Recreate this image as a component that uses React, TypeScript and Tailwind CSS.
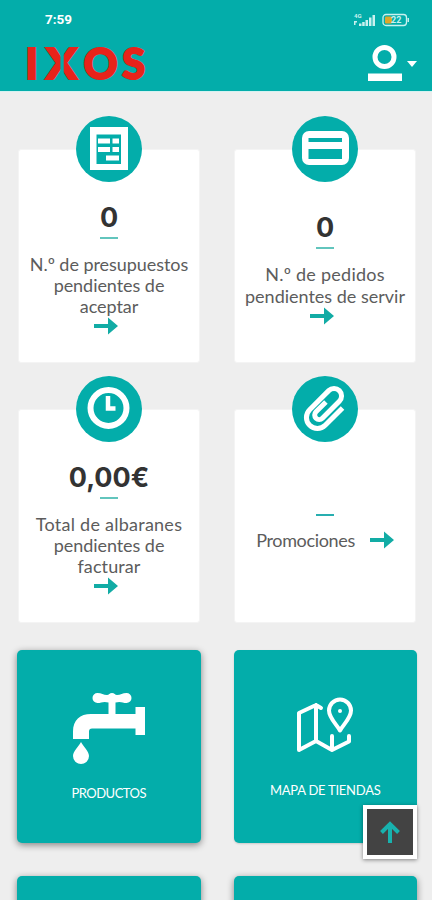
import type { ReactNode } from "react";

interface Summary {
  id: string;
  value?: string;
  lines: { text: string; tracking: string }[];
  icon: ReactNode;
  inline?: boolean;
}

function InvoiceIcon() {
  return (
    <svg viewBox="0 0 66 66" className="h-[66px] w-[66px]">
      <path fill="#fff" d="M14 11h38v43H14z" />
      <path fill="#03adaa" d="M20.500 18.500h24.500v29.500h-24.500z" />
      <path
        fill="#fff"
        d="M22 22.500h12v5h-12zM36.500 22.500h6.500v5h-6.500zM22 31h12v5h-12zM36.500 31h6.500v5h-6.500zM30 39.500h13v5h-13z"
      />
    </svg>
  );
}

function CardIcon() {
  return (
    <svg viewBox="0 0 66 66" className="h-[66px] w-[66px]">
      <rect x="10" y="15" width="47" height="34" rx="7" fill="#fff" />
      <rect x="16.500" y="22" width="33.500" height="4" fill="#03adaa" />
      <rect x="16.500" y="33" width="33.500" height="10" fill="#03adaa" />
    </svg>
  );
}

function ClockIcon() {
  return (
    <svg viewBox="0 0 66 66" className="h-[66px] w-[66px]" fill="none">
      <circle cx="32.500" cy="32" r="18" stroke="#fff" strokeWidth="6" />
      <path d="M32 20v12.500h7.500" stroke="#fff" strokeWidth="4.500" />
    </svg>
  );
}

function ClipIcon() {
  return (
    <svg viewBox="0 0 66 66" className="h-[66px] w-[66px]" fill="none">
      <path
        d="M12-13.500V11a11 11 0 0 1-22 0v-27a7.500 7.500 0 0 1 15 0V8a4.500 4.500 0 0 1-9 0V-6"
        transform="translate(32.500 33) rotate(45)"
        stroke="#fff"
        strokeWidth="5"
      />
    </svg>
  );
}

const summaries: Summary[] = [
  {
    id: "presupuestos",
    value: "0",
    lines: [
      { text: "N.º de presupuestos", tracking: "tracking-[-0.05px]" },
      { text: "pendientes de", tracking: "tracking-[-0.05px]" },
      { text: "aceptar", tracking: "tracking-[-0.05px]" },
    ],
    icon: <InvoiceIcon />,
  },
  {
    id: "pedidos",
    value: "0",
    lines: [
      { text: "N.º de pedidos", tracking: "tracking-[0.25px]" },
      { text: "pendientes de servir", tracking: "tracking-[0px]" },
    ],
    icon: <CardIcon />,
  },
  {
    id: "albaranes",
    value: "0,00€",
    lines: [
      { text: "Total de albaranes", tracking: "tracking-[0.25px]" },
      { text: "pendientes de", tracking: "tracking-[-0.05px]" },
      { text: "facturar", tracking: "tracking-[0.1px]" },
    ],
    icon: <ClockIcon />,
  },
  {
    id: "promociones",
    lines: [{ text: "Promociones", tracking: "tracking-[-0.35px]" }],
    icon: <ClipIcon />,
    inline: true,
  },
];

function Arrow() {
  return (
    <svg viewBox="0 0 24 18" className="h-[18px] w-6 shrink-0" fill="#12aca5">
      <path d="M0 7h14V.5L24 9l-10 8.500V11H0z" />
    </svg>
  );
}

function SummaryCard({ item }: { item: Summary }) {
  return (
    <div className="flex h-[247px] flex-col items-center">
      <div className="z-10 -mb-[33px] h-[66px] w-[66px] rounded-full bg-[#03adaa]">
        {item.icon}
      </div>
      <div className="flex h-[214px] w-full flex-col items-center justify-center rounded-[3px] border border-[#f4f4f4] bg-white pt-[22px]">
        {item.value && (
          <p className="h-[36px] font-[Inter] text-[27px] leading-[37px] font-bold text-[#333]">
            {item.value}
          </p>
        )}
        <div
          className={
            item.inline
              ? "mt-[10px] h-[2px] w-[18px] bg-[#28aeb0]"
              : "mt-[2px] h-[2px] w-[18px] bg-[#62c5bd]"
          }
        />
        {item.inline ? (
          <div className="mt-[14px] flex items-center gap-[15px] text-[18px] leading-[21px] text-[#5c5c5c]">
            <span className={item.lines[0].tracking}>{item.lines[0].text}</span>
            <Arrow />
          </div>
        ) : (
          <>
            <div className="mt-[15px] text-center text-[18px] leading-[21.300px] whitespace-nowrap text-[#5c5c5c]">
              {item.lines.map((line) => (
                <p key={line.text} className={line.tracking}>
                  {line.text}
                </p>
              ))}
            </div>
            <div className="flex w-full justify-center pr-[6px]">
              <Arrow />
            </div>
          </>
        )}
      </div>
    </div>
  );
}

function Header() {
  return (
    <header className="h-[92px] border-b border-[#d4f2f1] bg-[#03adaa]">
      <div className="flex h-[39px] items-center justify-between pr-[22px] pl-[45px] text-white">
        <span className="font-[Roboto] text-[13.500px] font-bold">7:59</span>
        <div className="flex items-center gap-[5px]">
          <svg viewBox="0 0 24 14" className="h-[14px] w-6" fill="#c9f1ef">
            <text x="1" y="5" fontSize="6" fontWeight="700" fontFamily="Roboto">
              4G
            </text>
            <path d="M1 8h3v1.500H2.500V12H1zM6 10.500h2.500V13H6zM9.200 9h2.500v4H9.200zM12.500 7H15v6h-2.500zM16 4.500h2.500V13H16zM19.500 2H22v11h-2.500z" />
          </svg>
          <svg viewBox="0 0 28 14" className="h-[14px] w-7">
            <rect x="1" y="1.500" width="23.500" height="11" rx="3" fill="none" stroke="#c9f1ef" strokeWidth="1.300" />
            <rect x="25.500" y="5" width="1.500" height="4" fill="#c9f1ef" />
            <rect x="3" y="3.500" width="7" height="7" rx="1" fill="#dda72c" />
            <text x="9" y="10.300" fontSize="9" fontWeight="700" fontFamily="Roboto" fill="#c9f1ef">
              22
            </text>
          </svg>
        </div>
      </div>
      <div className="flex h-[49px] items-center justify-between pr-[15px] pl-[23px]">
        <div className="flex pb-px font-[Lato] text-[42px] leading-[49px] font-black text-[#e8231a] [-webkit-text-stroke:2px_#e8231a]">
          <span className="w-[17px] text-center">I</span>
          {/* the X is split down the middle into two chevrons */}
          <span className="relative w-[43px] scale-x-110 text-center after:absolute after:inset-y-2 after:left-1/2 after:w-[3px] after:-translate-x-1/2 after:bg-[#03adaa]">
            X
          </span>
          <span className="w-[35px] text-center">O</span>
          <span className="w-[31px] text-center">S</span>
        </div>
        <div className="flex items-center gap-1">
          <svg viewBox="0 0 36 38" className="h-[38px] w-9" fill="none">
            <circle cx="17.500" cy="12" r="9.500" stroke="#fff" strokeWidth="5" />
            <path d="M1 28.500h34V36H1z" fill="#fff" />
          </svg>
          <svg viewBox="0 0 10 6" className="h-[6px] w-[10px]" fill="#fff">
            <path d="M0 0h10L5 6z" />
          </svg>
        </div>
      </div>
    </header>
  );
}

function FaucetIcon() {
  return (
    <svg viewBox="0 0 74 72" className="h-[72px] w-[74px]" fill="#fff">
      <path d="M36.500 10.500C31 9 29.500 11 25.500 11a5 5 0 0 1 0-10c4 0 6 2 9.500 2 2 0 2.500-2 5-2s3 2 5 2c3.500 0 5.500-2 9.500-2a5 5 0 0 1 0 10c-4 0-5.500-2-11-.5V22h20v-7H73v28h-9.500v-6.500H20c-2 0-3 1-3 3V47H1v-7.500C1 28 8 22 19 22h17.500z" />
      <path d="M9 50c2.500 5 8 9 8 14a8 8 0 0 1-16 0c0-5 5.500-9 8-14z" />
    </svg>
  );
}

function MapIcon() {
  return (
    <svg
      viewBox="0 0 60 56"
      className="h-14 w-[60px]"
      fill="none"
      stroke="#fff"
      strokeWidth="4"
      strokeLinecap="round"
      strokeLinejoin="round"
    >
      <path d="M26 11l-5-3L4 16v37l17-9 16 9 17-8.500V39M21 8v36M37 39v14" />
      <path d="M45 33.500c-3-5.500-11-12.500-11-20a11 11 0 0 1 22 0c0 7.500-8 14.500-11 20z" />
      <circle cx="45" cy="14" r="2" fill="#fff" stroke="none" />
    </svg>
  );
}

export default function App() {
  return (
    <div className="h-[900px] w-[432px] overflow-hidden bg-[#eee] font-[Lato,sans-serif]">
      <Header />

      <main className="grid grid-cols-2 gap-x-[34px] pt-6 pr-4 pl-[18px]">
        {summaries.map((item) => (
          <div key={item.id} className="mb-[13px]">
            <SummaryCard item={item} />
          </div>
        ))}
      </main>

      <section className="grid grid-cols-2 gap-x-[33px] gap-y-[33px] pt-[14px] pr-[15px] pl-[17px]">
        <div className="flex h-[193px] flex-col items-center rounded-[5px] bg-[#03adaa] pt-[42px] shadow-[0_2px_7px_rgba(0,0,0,0.45)]">
          <FaucetIcon />
          <p className="mt-[20px] text-[13px] leading-[18px] tracking-[-0.5px] text-white">PRODUCTOS</p>
        </div>
        <div className="relative flex h-[193px] flex-col items-center rounded-[5px] bg-[#03adaa] pt-[47px] shadow-[0_1px_2px_rgba(0,0,0,0.15)]">
          <MapIcon />
          <p className="mt-[28px] text-[13px] leading-[18px] tracking-[-0.25px] text-white">MAPA DE TIENDAS</p>
          <button className="absolute top-[155px] left-[129px] flex h-[54px] w-[54px] items-center justify-center border-4 border-white bg-[#434343] shadow-[0_1px_4px_rgba(0,0,0,0.45)]">
            <svg viewBox="0 0 20 22" className="h-[22px] w-5" fill="none" stroke="#18b2ae" strokeWidth="4">
              <path d="M10 22V3M1.500 11.500L10 3l8.500 8.500" />
            </svg>
          </button>
        </div>
        <div className="h-[193px] rounded-[5px] bg-[#03adaa] shadow-[0_2px_7px_rgba(0,0,0,0.45)]" />
        <div className="h-[193px] rounded-[5px] bg-[#03adaa] shadow-[0_2px_7px_rgba(0,0,0,0.45)]" />
      </section>
    </div>
  );
}
